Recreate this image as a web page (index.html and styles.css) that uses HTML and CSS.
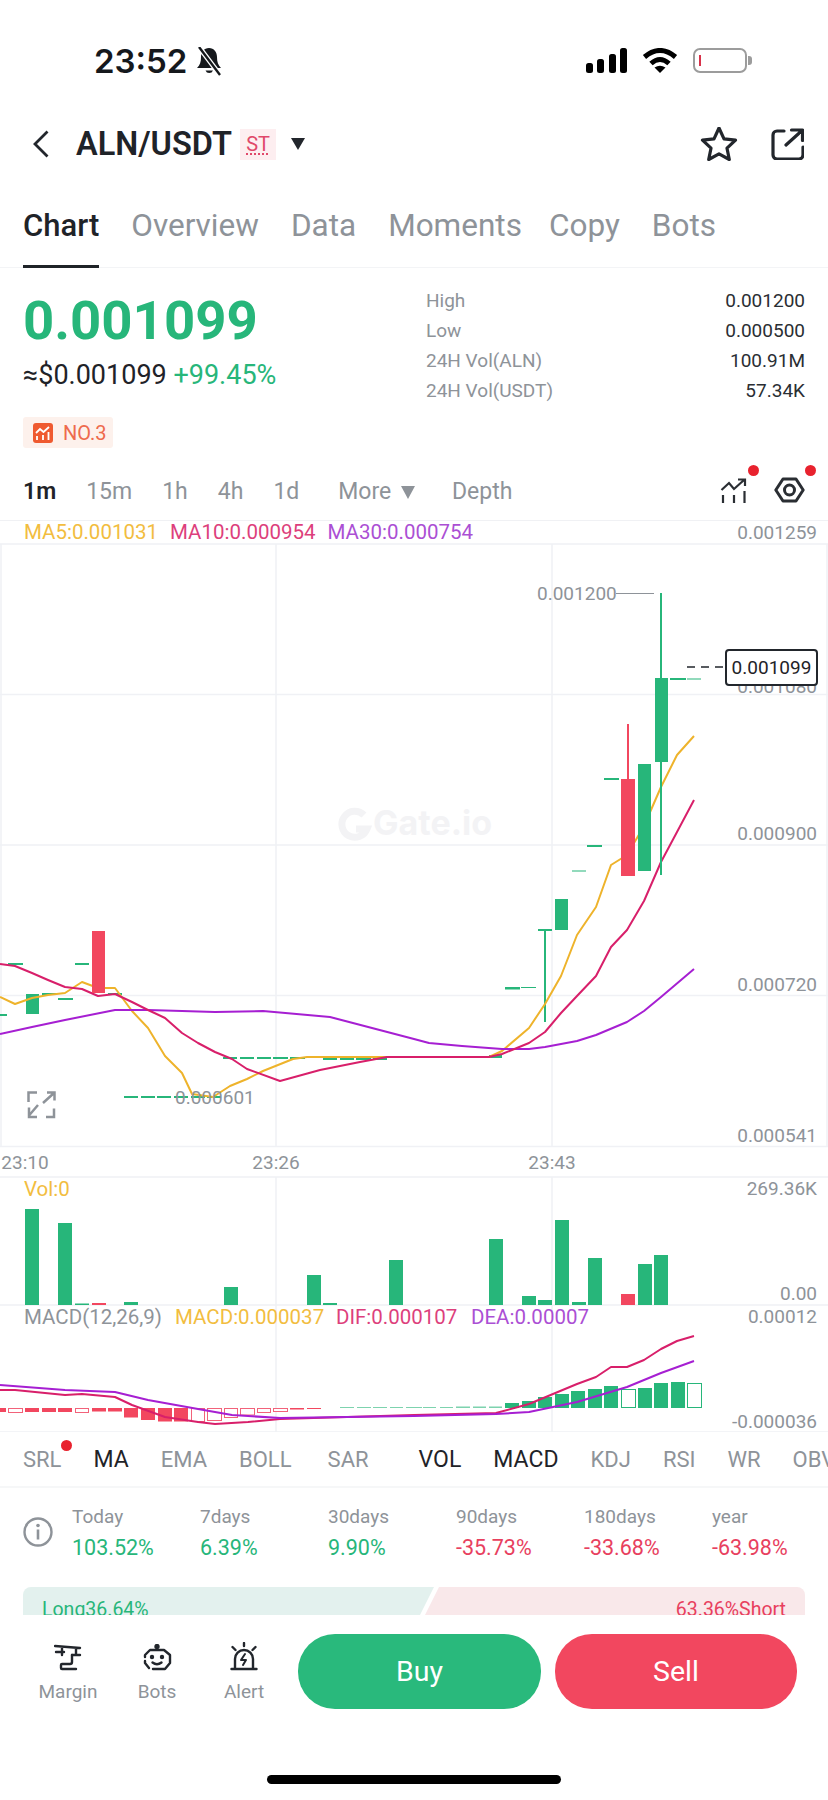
FILE: index.html
```html
<!DOCTYPE html>
<html>
	<head>
		<meta charset="UTF-8">
		<title>ALN/USDT</title>
		<link rel="stylesheet" href="styles.css">
	</head>

	<body>
		<div id="app">
			<div class="content">
				<!--状态栏-->
				<div class="status">
					<div class="status-left">
						<span class="clock">23:52</span>
						<svg class="bell" width="27" height="29" viewBox="0 0 27 29">
							<path d="M13 1c-5 0-8 4-8 9 0 5-1 8-4 11h24c-3-3-4-6-4-11 0-5-3-9-8-9z" fill="#15181c"/>
							<path d="M9.500 23.500a4 4 0 0 0 7.500 0z" fill="#15181c"/>
							<path d="M3 0l21 28" stroke="#fff" stroke-width="5"/>
							<path d="M3 0l21 28" stroke="#15181c" stroke-width="2.400"/>
						</svg>
					</div>
					<div class="status-right">
						<svg width="41" height="25" viewBox="0 0 41 25" fill="#000">
							<rect x="0" y="15" width="7" height="10" rx="2.500"/>
							<rect x="11" y="11" width="7" height="14" rx="2.500"/>
							<rect x="23" y="6" width="7" height="19" rx="2.500"/>
							<rect x="34" y="0" width="7" height="25" rx="2.500"/>
						</svg>
						<svg width="36" height="25" viewBox="0 0 36 25">
							<path d="M2.500 9Q18-4 33.500 9" fill="none" stroke="#000" stroke-width="5"/>
							<path d="M9 15.500Q18 7.500 27 15.500" fill="none" stroke="#000" stroke-width="5"/>
							<path d="M12.500 19.500Q18 16 23.500 19.500L18 25z" fill="#000"/>
						</svg>
						<div class="battery"><i></i></div>
					</div>
				</div>

				<!--标题-->
				<div class="nav">
					<svg class="back" width="18" height="28" viewBox="0 0 18 28">
						<path d="M15.500 1.500L3 14l12.500 12.500" fill="none" stroke="#22262c" stroke-width="2.800"/>
					</svg>
					<h3 class="pair">ALN/USDT</h3>
					<span class="st">ST</span>
					<i class="caret"></i>
					<div class="nav-right">
						<svg width="38" height="34" viewBox="0 0 38 34">
							<path d="M19 2.500l5 10.800 11.500 1.400-8.500 8 2.300 11.300L19 28.300 8.700 34 11 22.700l-8.500-8 11.500-1.400z" fill="none" stroke="#22262c" stroke-width="3.200" stroke-linejoin="round" transform="translate(0 -1.500)"/>
						</svg>
						<svg width="33" height="32" viewBox="0 0 33 32" fill="none" stroke="#22262c" stroke-width="3.200" stroke-linecap="round" stroke-linejoin="round">
							<path d="M13 3H6a4 4 0 0 0-4 4v20a4 4 0 0 0 4 4h22a4 4 0 0 0 4-4v-8"/>
							<path d="M15 17L30.500 3M20.500 2h11v10.500"/>
						</svg>
					</div>
				</div>

				<!--标签-->
				<div class="tabs">
					<a href="#" class="active">Chart</a>
					<a href="#">Overview</a>
					<a href="#">Data</a>
					<a href="#">Moments</a>
					<a href="#" class="tab-copy">Copy</a>
					<a href="#">Bots</a>
				</div>

				<!--价格-->
				<div class="quote">
					<div class="quote-left">
						<div class="last">0.001099</div>
						<div class="fiat">≈$0.001099 <span class="up-text">+99.45%</span></div>
						<div class="rank">
							<svg width="20" height="20" viewBox="0 0 20 20">
								<rect width="20" height="20" rx="3" fill="#ef5a30"/>
								<path d="M3 10l4-4 3.500 3L16 4" fill="none" stroke="#fff" stroke-width="1.800"/>
								<path d="M4 13v4M10 12v5M15.500 9v8" fill="none" stroke="#fff" stroke-width="1.800"/>
							</svg>
							NO.3
						</div>
					</div>
					<div class="stats">
						<p><span>High</span><b>0.001200</b></p>
						<p><span>Low</span><b>0.000500</b></p>
						<p><span>24H Vol(ALN)</span><b>100.91M</b></p>
						<p><span>24H Vol(USDT)</span><b>57.34K</b></p>
					</div>
				</div>

				<!--周期-->
				<div class="periods">
					<a href="#" class="active">1m</a>
					<a href="#">15m</a>
					<a href="#">1h</a>
					<a href="#">4h</a>
					<a href="#">1d</a>
					<a href="#" class="more">More <i></i></a>
					<a href="#" class="depth">Depth</a>
					<div class="tools">
						<span class="tool">
							<svg width="28" height="28" viewBox="0 0 28 28" fill="none" stroke="#2a2e33" stroke-width="2.200">
								<path d="M3 18v8M14 18v8M24.500 14v12"/>
								<path d="M1.500 13L9 6l5 6L24 3M18 2.500h7V9"/>
							</svg>
							<em class="dot"></em>
						</span>
						<span class="tool">
							<svg width="31" height="26" viewBox="0 0 31 26" fill="none" stroke="#2a2e33" stroke-width="3">
								<path d="M1.800 13L9 2h13l7.200 11L22 24H9z" stroke-linejoin="round"/>
								<circle cx="15.500" cy="13" r="5"/>
							</svg>
							<em class="dot"></em>
						</span>
					</div>
				</div>

				<!--均线-->
				<div class="legend">
					<span class="c-yellow">MA5:0.001031</span>
					<span class="c-pink">MA10:0.000954</span>
					<span class="c-purple">MA30:0.000754</span>
					<span class="legend-top">0.001259</span>
				</div>

				<!--K线图，坐标和页面坐标一致-->
				<svg class="chart" width="828" height="889" viewBox="0 543 828 889">
					<!--网格-->
					<g class="grid">
						<path d="M0 544H828M0 694.500H828M0 845H828M0 995.500H828M0 1146.500H828M0 1177H828M0 1305H828M0 1432H828"/>
						<path d="M1 544V1146M276 544V1146M552 544V1146M827 544V1146M276 1177V1432M552 1177V1432"/>
					</g>

					<!--水印-->
					<g class="mark">
						<path d="M364 815a13 13 0 1 0 3 14h-11" fill="none" stroke="#f3f3f5" stroke-width="7"/>
						<text x="373" y="835">Gate.io</text>
					</g>

					<!--坐标文字-->
					<g class="axis">
						<text x="817" y="692.500">0.001080</text>
						<text x="817" y="840">0.000900</text>
						<text x="817" y="991">0.000720</text>
						<text x="817" y="1142">0.000541</text>
						<text x="817" y="1195">269.36K</text>
						<text x="817" y="1300">0.00</text>
						<text x="817" y="1323">0.00012</text>
						<text x="817" y="1428">-0.000036</text>
					</g>
					<g class="times">
						<text x="25" y="1169">23:10</text>
						<text x="276" y="1169">23:26</text>
						<text x="552" y="1169">23:43</text>
					</g>

					<!--蜡烛-->
					<g class="up">
						<rect x="0" y="1014" width="7" height="2"/>
						<rect x="8" y="963" width="15" height="2"/>
						<rect x="26" y="994" width="13" height="20"/>
						<rect x="42" y="993" width="14" height="2"/>
						<rect x="58" y="998" width="15" height="2"/>
						<rect x="75" y="963" width="14" height="2"/>
						<rect x="108" y="993" width="14" height="2"/>
						<path d="M124 1096h14v2h-14zM141 1096h14v2h-14zM157 1096h14v2h-14zM174 1096h14v2h-14zM191 1096h14v2h-14zM207 1096h14v2h-14z"/>
						<path d="M223 1057h14v2h-14zM240 1057h14v2h-14zM257 1057h14v2h-14zM273 1057h15v2h-15zM290 1057h15v2h-15zM307 1056h14v2h-14z"/>
						<path d="M323 1058h14v2h-14zM340 1058h14v2h-14zM356 1058h15v2h-15zM373 1058h14v2h-14zM389 1056h15v2h-15z"/>
						<rect x="406" y="1056" width="83" height="2"/>
						<rect x="489" y="1055" width="13" height="3"/>
						<rect x="505" y="987" width="15" height="2.500"/>
						<rect x="521" y="987" width="15" height="1"/>
						<rect x="538" y="929" width="14" height="2"/>
						<rect x="544" y="930" width="2" height="92"/>
						<rect x="555" y="899" width="13" height="31"/>
						<rect x="572" y="870.500" width="14" height="1"/>
						<rect x="587" y="845" width="15" height="2"/>
						<rect x="604" y="778" width="15" height="2"/>
						<rect x="670" y="678" width="16" height="2"/>
						<rect x="687" y="678.500" width="14" height="1"/>
					</g>

					<!--均线-->
					<polyline class="l-yellow" points="0,997 15,1004 32,998 48,995 65,993 82,982 98,988 115,988 132,1011 148,1028 165,1056 182,1073 192,1094 213,1097 230,1086 247,1079 263,1071 293,1059 307,1057 414,1057 489,1057 502,1051 529,1028 545,1004 561,976 577,935 596,907 611,865 627,855 644,826 661,787 677,755 694,736"/>
					<polyline class="l-purple" points="0,1034 32,1027 65,1020 115,1010 148,1010 182,1011 215,1012 263,1011 330,1017 414,1039 429,1043 462,1046 502,1049 529,1049 545,1047 577,1041 596,1035 627,1022 644,1011 661,997 694,969"/>
					<polyline class="l-pink" points="0,964 15,966 32,973 48,980 65,987 82,989 98,996 115,994 132,1002 148,1010 165,1018 182,1033 198,1043 215,1052 232,1059 247,1069 280,1081 320,1070 360,1062 387,1057 489,1057 502,1054 529,1043 545,1032 561,1013 577,996 596,976 611,947 627,930 644,901 661,862 677,832 694,800"/>

					<g class="down">
						<rect x="92" y="931" width="13" height="62"/>
						<rect x="627" y="724" width="2" height="55"/>
						<rect x="621" y="779" width="14" height="97"/>
					</g>
					<g class="up">
						<rect x="638" y="764" width="13" height="107"/>
						<rect x="660" y="593" width="2" height="282"/>
						<rect x="655" y="678" width="13" height="84"/>
					</g>

					<!--最高最低价-->
					<text class="peak" x="537" y="600">0.001200</text>
					<path class="peak-line" d="M616 593.500H654"/>
					<text class="peak" x="175" y="1103.500">0.000601</text>
					<path class="last-line" d="M687 667H724"/>
					<rect class="last-box" x="726" y="650" width="91" height="35" rx="3"/>
					<text class="last-text" x="771.500" y="674">0.001099</text>

					<!--全屏-->
					<path class="full" d="M28.500 1102v-9.500h8.500M43 1103l11-10M47 1092.500h7.500v8M38 1105l-9 10.500M29 1107.500v9.500h8M54 1108.500v8.500h-8"/>

					<!--成交量-->
					<text class="c-yellow panel-label" x="24" y="1196">Vol:0</text>
					<g class="up">
						<rect x="25" y="1209" width="14" height="96"/>
						<rect x="58" y="1223" width="14" height="82"/>
						<rect x="75" y="1303.500" width="14" height="1.500"/>
						<rect x="124" y="1302" width="14" height="3"/>
						<rect x="224" y="1287" width="14" height="18"/>
						<rect x="307" y="1275" width="14" height="30"/>
						<rect x="323" y="1303" width="14" height="2"/>
						<rect x="389" y="1260" width="14" height="45"/>
						<rect x="489" y="1239" width="14" height="66"/>
						<rect x="522" y="1296" width="14" height="9"/>
						<rect x="538" y="1300" width="14" height="5"/>
						<rect x="555" y="1220" width="14" height="85"/>
						<rect x="572" y="1302" width="14" height="3"/>
						<rect x="588" y="1258" width="14" height="47"/>
						<rect x="638" y="1264" width="14" height="41"/>
						<rect x="654" y="1255" width="14" height="50"/>
					</g>
					<g class="down">
						<rect x="92" y="1303" width="14" height="2"/>
						<rect x="621" y="1294" width="14" height="11"/>
					</g>

					<!--MACD-->
					<text class="panel-label gray" x="24" y="1324">MACD(12,26,9)</text>
					<text class="c-yellow panel-label" x="175" y="1324">MACD:0.000037</text>
					<text class="c-pink panel-label" x="336" y="1324">DIF:0.000107</text>
					<text class="c-purple panel-label" x="471" y="1324">DEA:0.00007</text>

					<g class="down">
						<rect x="0" y="1408" width="6" height="4"/>
						<rect x="25" y="1408" width="14" height="4"/>
						<rect x="42" y="1408" width="14" height="4"/>
						<rect x="58" y="1408" width="14" height="4"/>
						<rect x="92" y="1408" width="14" height="3.500"/>
						<rect x="108" y="1408" width="14" height="3.500"/>
						<rect x="124" y="1408" width="14" height="9.500"/>
						<rect x="141" y="1408" width="14" height="12"/>
						<rect x="158" y="1408" width="14" height="13.500"/>
						<rect x="174" y="1408" width="14" height="13.500"/>
						<rect x="290" y="1408" width="14" height="1.500"/>
						<rect x="307" y="1408" width="14" height="1"/>
					</g>
					<g class="hollow-down">
						<rect x="8.500" y="1408.500" width="14" height="4"/>
						<rect x="75.500" y="1408.500" width="13" height="4"/>
						<rect x="191.500" y="1408.500" width="13" height="13"/>
						<rect x="207.500" y="1408.500" width="14" height="12"/>
						<rect x="224.500" y="1408.500" width="13" height="9"/>
						<rect x="240.500" y="1408.500" width="14" height="6.500"/>
						<rect x="257.500" y="1408.500" width="13" height="4"/>
						<rect x="273.500" y="1408.500" width="14" height="3"/>
					</g>
					<g class="up light">
						<rect x="340" y="1407" width="14" height="1"/>
						<rect x="357" y="1407" width="14" height="1"/>
						<rect x="373" y="1407" width="14" height="1"/>
						<rect x="390" y="1407" width="13" height="1"/>
						<rect x="406" y="1407" width="16" height="1"/>
						<rect x="423" y="1407" width="13" height="1"/>
						<rect x="440" y="1407" width="13" height="1"/>
						<rect x="456" y="1406.500" width="14" height="1.500"/>
						<rect x="473" y="1406.500" width="13" height="1.500"/>
						<rect x="489" y="1406.500" width="13" height="1.500"/>
					</g>
					<g class="up">
						<rect x="505" y="1403" width="14" height="5"/>
						<rect x="522" y="1401" width="14" height="7"/>
						<rect x="538" y="1397" width="14" height="11"/>
						<rect x="555" y="1394" width="14" height="14"/>
						<rect x="571" y="1391" width="14" height="17"/>
						<rect x="588" y="1389" width="14" height="19"/>
						<rect x="604" y="1386" width="14" height="22"/>
						<rect x="638" y="1388" width="14" height="20"/>
						<rect x="654" y="1383" width="14" height="25"/>
						<rect x="671" y="1382" width="14" height="26"/>
					</g>
					<g class="hollow-up">
						<rect x="621.500" y="1389.500" width="14" height="18"/>
						<rect x="687.500" y="1383.500" width="14" height="24"/>
					</g>
					<polyline class="l-pink" points="0,1390 15,1390 65,1395 82,1394 115,1397 132,1405 165,1417 198,1422 215,1424 248,1422 280,1419 414,1415 496,1413 529,1404 577,1384 596,1377 611,1367 627,1367 644,1360 661,1349 677,1341 694,1336"/>
					<polyline class="l-purple" points="0,1385 65,1390 115,1392 148,1400 198,1409 232,1415 280,1418 414,1416 496,1414 529,1412 577,1402 627,1387 661,1373 694,1361"/>
				</svg>

				<!--指标-->
				<div class="indicators">
					<a href="#" class="srl">SRL<em class="dot"></em></a>
					<a href="#" class="active">MA</a>
					<a href="#">EMA</a>
					<a href="#">BOLL</a>
					<a href="#" class="sar">SAR</a>
					<i class="sep"></i>
					<a href="#" class="active">VOL</a>
					<a href="#" class="active">MACD</a>
					<a href="#">KDJ</a>
					<a href="#">RSI</a>
					<a href="#">WR</a>
					<a href="#">OBV</a>
				</div>

				<!--涨跌幅-->
				<div class="changes">
					<svg class="info" width="30" height="30" viewBox="0 0 30 30">
						<circle cx="15" cy="15" r="13.500" fill="none" stroke="#8e9399" stroke-width="2.400"/>
						<circle cx="15" cy="8.500" r="1.800" fill="#8e9399"/>
						<path d="M15 12.500v10" stroke="#8e9399" stroke-width="2.600"/>
					</svg>
					<div class="change-list">
						<div><span>Today</span><b class="up-text">103.52%</b></div>
						<div><span>7days</span><b class="up-text">6.39%</b></div>
						<div><span>30days</span><b class="up-text">9.90%</b></div>
						<div><span>90days</span><b class="down-text">-35.73%</b></div>
						<div><span>180days</span><b class="down-text">-33.68%</b></div>
						<div><span>year</span><b class="down-text">-63.98%</b></div>
					</div>
				</div>

				<!--多空比-->
				<div class="ratio">
					<div class="long">Long36.64%</div>
					<div class="short">63.36%Short</div>
				</div>
			</div>

			<!--底部-->
			<div class="footer">
				<div class="actions">
					<div class="links">
						<a href="#" class="link-margin">
							<svg width="28" height="28" viewBox="0 0 28 28" fill="none" stroke="#22262c" stroke-width="2.400" stroke-linecap="round" stroke-linejoin="round">
								<path d="M1 2l25 2M2 8h8M8 3v8M18 11h8M22 4v7"/>
								<path d="M18 11v7a2 2 0 0 1-2 2H8a1 1 0 0 0-1 1v3a1 1 0 0 0 1 1h14"/>
							</svg>
							Margin
						</a>
						<a href="#" class="link-bots">
							<svg width="32" height="28" viewBox="0 0 32 28" fill="none" stroke="#22262c" stroke-width="2.400" stroke-linecap="round" stroke-linejoin="round">
								<circle cx="16" cy="2.500" r="1.500" fill="#22262c"/>
								<path d="M4 13v-2l5-5h14l6 5v8l-5 6H12"/>
								<path d="M4 17v2l4 5"/>
								<path d="M11.500 18.500q4.500 3.500 9 0"/>
								<circle cx="11" cy="13" r="1" fill="#22262c"/>
								<circle cx="21" cy="13" r="1" fill="#22262c"/>
							</svg>
							Bots
						</a>
						<a href="#" class="link-alert">
							<svg width="28" height="30" viewBox="0 0 28 30" fill="none" stroke="#22262c" stroke-width="2.400" stroke-linecap="round" stroke-linejoin="round">
								<path d="M1.500 27h25M5 27V17a9 9 0 0 1 18 0v10"/>
								<path d="M14 1v3M2.500 5l3 3M25.500 5l-3 3"/>
								<path d="M15 12l-4 6h5l-3 5" stroke-width="2"/>
							</svg>
							Alert
						</a>
					</div>
					<a href="#" class="btn buy">Buy</a>
					<a href="#" class="btn sell">Sell</a>
				</div>
				<div class="home"></div>
			</div>
		</div>
	</body>
</html>
```

FILE: styles.css
```css
*{
	margin: 0;
	padding: 0;
	box-sizing: border-box;
}
body{
	font-family: Roboto, "Liberation Sans", sans-serif;
	color: #1f2328;
	background: white;
}
a{
	text-decoration: none;
	color: inherit;
}
i,em{
	font-style: normal;
}
#app{
	width: 828px;
	height: 1800px;
	display: flex;
	flex-direction: column;
	overflow: hidden;
}
.content{
	height: 1615px;
	overflow: hidden;
}

/* 状态栏 */
.status{
	height: 104px;
	padding: 48px 82px 0 94px;
	display: flex;
	justify-content: space-between;
}
.status-left{
	display: flex;
	align-items: flex-start;
	gap: 9px;
}
.clock{
	font-family: Inter, sans-serif;
	font-size: 33px;
	line-height: 27px;
	font-weight: 600;
	color: #15181c;
}
.bell{
	margin-top: -1px;
}
.status-right{
	display: flex;
	gap: 15px;
	height: 25px;
}
.battery{
	width: 54px;
	height: 25px;
	border: 2px solid #9c9c9c;
	border-radius: 7px;
	position: relative;
	margin-right: -1px;
}
.battery:after{
	content: "";
	position: absolute;
	right: -7px;
	top: 6px;
	width: 4px;
	height: 9px;
	background: #9c9c9c;
	border-radius: 0 3px 3px 0;
}
.battery i{
	display: block;
	width: 2px;
	height: 11px;
	background: #d8324a;
	margin: 5px 0 0 4px;
}

/* 标题 */
.nav{
	height: 80px;
	display: flex;
	align-items: center;
	padding: 0 24px 0 32px;
}
.pair{
	font-size: 32.500px;
	font-weight: 600;
	margin-left: 26px;
}
.st{
	width: 36px;
	height: 31px;
	background: #fdeef0;
	color: #e0486a;
	font-size: 20px;
	line-height: 30px;
	text-align: center;
	margin-left: 8px;
	text-decoration: underline dotted;
	text-underline-offset: 3px;
}
.caret{
	width: 0;
	height: 0;
	border-left: 7.5px solid transparent;
	border-right: 7.5px solid transparent;
	border-top: 12px solid #22262c;
	margin-left: 15px;
}
.nav-right{
	margin-left: auto;
	display: flex;
	align-items: center;
	gap: 33px;
}

/* 标签 */
.tabs{
	height: 84px;
	padding: 0 23px;
	display: flex;
	gap: 32px;
	border-bottom: 1px solid #f3f4f6;
}
.tabs a{
	font-size: 31.500px;
	line-height: 84px;
	height: 84px;
	color: #8e9399;
}
.tabs .active{
	color: #1f2328;
	font-size: 31px;
	font-weight: 500;
	border-bottom: 3px solid #1f2328;
}
.tabs .tab-copy{
	margin-left: -5px;
}

/* 价格 */
.quote{
	height: 190px;
	padding: 0 23px 0 23px;
	display: flex;
	justify-content: space-between;
}
.last{
	font-size: 54.500px;
	font-weight: 700;
	line-height: 54px;
	color: #27b67a;
	margin-top: 25px;
}
.fiat{
	font-size: 27px;
	line-height: 30px;
	margin-top: 13px;
}
.up-text{
	color: #27b67a;
}
.down-text{
	color: #e8405e;
}
.rank{
	margin-top: 27px;
	width: 90px;
	height: 31px;
	background: #fdf1ec;
	border-radius: 3px;
	display: flex;
	align-items: center;
	gap: 10px;
	padding-left: 10px;
	font-size: 20px;
	color: #ee6a4d;
}
.stats{
	width: 379px;
	padding-top: 18px;
}
.stats p{
	display: flex;
	justify-content: space-between;
	height: 30px;
	line-height: 30px;
	font-size: 19px;
}
.stats span{
	color: #8e9399;
}
.stats b{
	font-weight: 400;
	color: #2a2e33;
}

/* 周期 */
.periods{
	height: 62px;
	padding: 4px 23px 0 23px;
	display: flex;
	align-items: center;
	font-size: 23px;
	color: #8e9399;
	gap: 30px;
}
.periods .active{
	color: #1f2328;
	font-weight: 600;
}
.more{
	margin-left: 9px;
}
.depth{
	margin-left: 7px;
}
.more i{
	display: inline-block;
	width: 0;
	height: 0;
	border-left: 7.5px solid transparent;
	border-right: 7.5px solid transparent;
	border-top: 13px solid #8e9399;
	margin-left: 4px;
}
.tools{
	margin-left: auto;
	display: flex;
	align-items: center;
	gap: 26px;
}
.tool{
	position: relative;
	display: block;
	height: 28px;
}
.dot{
	position: absolute;
	width: 11px;
	height: 11px;
	border-radius: 50%;
	background: #e8222e;
	right: -11px;
	top: -12px;
}

/* 均线 */
.legend{
	height: 23px;
	padding: 0 11px 0 24px;
	border-top: 1px solid #f0f1f4;
	display: flex;
	gap: 12px;
	font-size: 20.500px;
	line-height: 23px;
}
.legend-top{
	margin-left: auto;
	font-size: 19px;
	color: #8e9399;
}
.c-yellow{
	color: #f2bd3f;
	fill: #f2bd3f;
}
.c-pink{
	color: #dd3f7c;
	fill: #dd3f7c;
}
.c-purple{
	color: #ab4fd4;
	fill: #ab4fd4;
}

/* K线图 */
.chart{
	display: block;
}
.grid path{
	stroke: #f0f1f5;
	stroke-width: 1.5;
	fill: none;
}
.mark text{
	font-family: Inter, sans-serif;
	font-size: 34px;
	font-weight: 700;
	fill: #f3f3f5;
}
.axis text{
	font-size: 19px;
	fill: #8e9399;
	text-anchor: end;
}
.times text{
	font-size: 19px;
	fill: #8e9399;
	text-anchor: middle;
}
.up rect,.up path{
	fill: #27b67a;
}
.down rect{
	fill: #f2475f;
}
.light{
	opacity: .6;
}
.hollow-down rect{
	fill: white;
	stroke: #f2627a;
	stroke-width: 1;
}
.hollow-up rect{
	fill: white;
	stroke: #27b67a;
	stroke-width: 1;
}
.l-yellow,.l-pink,.l-purple{
	fill: none;
	stroke-width: 2;
	stroke-linejoin: round;
}
.l-yellow{
	stroke: #eeb32b;
}
.l-pink{
	stroke: #d81f6a;
}
.l-purple{
	stroke: #a61fd2;
}
.peak{
	font-size: 19px;
	fill: #8e9399;
}
.peak-line{
	stroke: #8e9399;
	stroke-width: 1;
}
.last-line{
	stroke: #22262c;
	stroke-width: 1.5;
	stroke-dasharray: 8 6;
}
.last-box{
	fill: white;
	stroke: #22262c;
	stroke-width: 2;
}
.last-text{
	font-size: 19px;
	fill: #1f2328;
	text-anchor: middle;
}
.full{
	fill: none;
	stroke: #8e9399;
	stroke-width: 2.500;
}
.panel-label{
	font-size: 20.500px;
}
.gray{
	fill: #8e9399;
}

/* 指标 */
.indicators{
	height: 56px;
	padding: 0 0 0 23px;
	display: flex;
	align-items: center;
	font-size: 22px;
	color: #8e9399;
	border-bottom: 2px solid #f6f7f8;
	gap: 32px;
	white-space: nowrap;
}
.indicators .active{
	font-size: 23px;
	color: #1f2328;
}
.srl{
	position: relative;
}
.srl .dot{
	right: -11px;
	top: -7px;
}
.sar{
	margin-left: 4px;
}
.sep{
	width: 1px;
	height: 26px;
	background: #e6e8eb;
	margin: 0 -6px 0 -8px;
}

/* 涨跌幅 */
.changes{
	height: 99px;
	padding: 0 0 12px 23px;
	display: flex;
	align-items: center;
}
.info{
	flex-shrink: 0;
}
.change-list{
	display: grid;
	grid-template-columns: repeat(6,128px);
	margin-left: 19px;
	margin-top: 3px;
}
.change-list span{
	display: block;
	font-size: 19px;
	line-height: 26px;
	color: #8e9399;
}
.change-list b{
	display: block;
	font-size: 21.500px;
	font-weight: 400;
	line-height: 30px;
	margin-top: 3px;
}

/* 多空比 */
.ratio{
	height: 28px;
	margin: 0 23px;
	display: flex;
	overflow: hidden;
	border-radius: 8px 8px 0 0;
	font-size: 19.500px;
	line-height: 46px;
}
.long{
	width: 411px;
	background: #e3f1ee;
	color: #27b67a;
	padding-left: 19px;
	clip-path: polygon(0 0,100% 0,calc(100% - 14px) 100%,0 100%);
}
.short{
	flex: 1;
	margin-left: -9px;
	background: #f9e8ea;
	color: #e8405e;
	text-align: right;
	padding-right: 19px;
	clip-path: polygon(14px 0,100% 0,100% 100%,0 100%);
}

/* 底部 */
.footer{
	flex: 1;
	background: white;
}
.actions{
	padding: 19px 31px 0 0;
	display: flex;
}
.links{
	position: relative;
	width: 298px;
	display: flex;
	font-size: 19px;
	color: #8e9399;
}
.links a{
	display: flex;
	flex-direction: column;
	align-items: center;
	height: 69px;
	justify-content: flex-end;
	gap: 8px;
}
.link-margin{
	width: 60px;
	margin-left: 38px;
}
.link-bots{
	width: 40px;
	margin-left: 39px;
}
.link-alert{
	width: 42px;
	margin-left: 46px;
}
.btn{
	height: 75px;
	border-radius: 37px;
	color: white;
	font-size: 28.500px;
	font-weight: 400;
	line-height: 75px;
	text-align: center;
}
.buy{
	width: 243px;
	background: #29b97c;
}
.sell{
	width: 242px;
	background: #f2475f;
	margin-left: 14px;
}
.home{
	width: 294px;
	height: 9px;
	background: black;
	border-radius: 5px;
	margin: 66px auto 0;
}
```
